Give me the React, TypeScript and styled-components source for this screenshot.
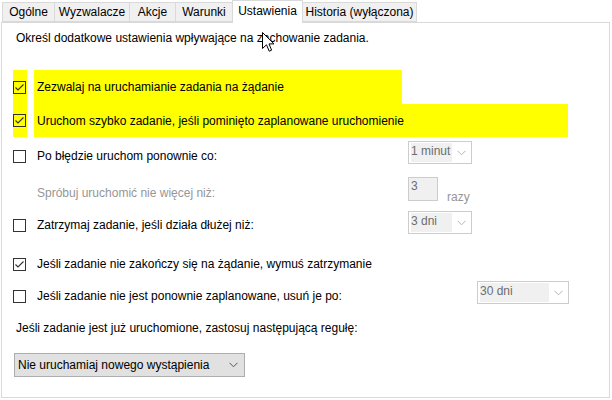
import React from "react";
import styled, { createGlobalStyle } from "styled-components";

const GlobalStyle = createGlobalStyle`
  html, body { margin: 0; padding: 0; background: #ffffff; }
  body {
    font-family: "Liberation Sans", Arial, sans-serif;
    font-size: 12px;
    color: #000000;
  }
`;

const YELLOW = "#ffff00";

const Root = styled.div`
  position: relative;
  width: 612px;
  height: 400px;
  overflow: hidden;
  background: #ffffff;
`;

const TabBar = styled.div`
  display: flex;
  align-items: flex-end;
  height: 22px;
  padding-left: 2px;
  position: relative;
  z-index: 1;
`;

const Tab = styled.div<{ $w: number; $active?: boolean; $first?: boolean }>`
  box-sizing: border-box;
  width: ${(p) => p.$w}px;
  height: ${(p) => (p.$active ? 23 : 20)}px;
  margin-bottom: ${(p) => (p.$active ? -1 : 0)}px;
  margin-left: ${(p) => (p.$first ? 0 : -1)}px;
  display: flex;
  align-items: ${(p) => (p.$active ? "flex-start" : "center")};
  padding-top: ${(p) => (p.$active ? 3 : 0)}px;
  justify-content: center;
  border: 1px solid #d9d9d9;
  border-bottom: ${(p) => (p.$active ? "none" : "1px solid #d9d9d9")};
  background: ${(p) => (p.$active ? "#ffffff" : "#f0f0f0")};
  position: relative;
  z-index: ${(p) => (p.$active ? 2 : 0)};
  white-space: nowrap;
`;

const Panel = styled.div`
  box-sizing: border-box;
  margin-left: 1px;
  width: 609px;
  height: 376px;
  border: 1px solid #d9d9d9;
  background: #ffffff;
  display: flex;
  flex-direction: column;
`;

const Description = styled.div`
  height: 30px;
  line-height: 30px;
  padding-left: 14px;
  white-space: nowrap;
`;

const Row = styled.div<{ $h: number; $mt?: number }>`
  display: flex;
  height: ${(p) => p.$h}px;
  margin-top: ${(p) => p.$mt ?? 0}px;
  padding-left: 11px;
`;

const CheckCell = styled.div<{ $hl?: boolean }>`
  width: 14px;
  display: flex;
  align-items: center;
  background: ${(p) => (p.$hl ? YELLOW : "transparent")};
`;

const Box = styled.div`
  box-sizing: border-box;
  width: 13px;
  height: 13px;
  border: 1px solid #333333;
  display: flex;
  align-items: center;
  justify-content: center;
`;

const Label = styled.div<{ $w: number; $hl?: boolean; $muted?: boolean }>`
  box-sizing: border-box;
  width: ${(p) => p.$w}px;
  margin-left: 7px;
  padding-left: 3px;
  display: flex;
  align-items: center;
  white-space: nowrap;
  background: ${(p) => (p.$hl ? YELLOW : "transparent")};
  color: ${(p) => (p.$muted ? "#969696" : "#000000")};
`;

const Controls = styled.div`
  display: flex;
  align-items: flex-start;
`;

const Combo = styled.div<{ $w: number }>`
  box-sizing: border-box;
  width: ${(p) => p.$w}px;
  height: 23px;
  border: 1px solid #cccccc;
  display: flex;
  align-items: flex-start;
  padding: 1px 0 0 2px;
`;

const ComboValue = styled.div<{ $w: number }>`
  width: ${(p) => p.$w}px;
  height: 19px;
  background: #f0f0f0;
  color: #6d6d6d;
  line-height: 17px;
  overflow: hidden;
  white-space: nowrap;
`;

const ChevronSlot = styled.div`
  flex: 1;
  height: 19px;
  display: flex;
  align-items: center;
  justify-content: center;
`;

const SpinBox = styled.div`
  box-sizing: border-box;
  width: 30px;
  height: 24px;
  border: 1px solid #cccccc;
  background: #f0f0f0;
  color: #6d6d6d;
  padding: 1px 0 0 2px;
  line-height: 15px;
`;

const Unit = styled.div`
  align-self: center;
  margin-left: 9px;
  margin-top: 8px;
  color: #969696;
`;

const Note = styled.div`
  height: 18px;
  line-height: 18px;
  margin-top: 8px;
  padding-left: 14px;
  white-space: nowrap;
`;

const Select = styled.div`
  box-sizing: border-box;
  width: 231px;
  height: 24px;
  margin: 16px 0 0 12px;
  border: 1px solid #adadad;
  background: #e1e1e1;
  display: flex;
  align-items: center;
  padding-left: 3px;
  padding-right: 6px;
  justify-content: space-between;
  white-space: nowrap;
`;

const Cursor = styled.svg`
  position: absolute;
  left: 262px;
  top: 32px;
  z-index: 5;
`;

const Check = ({ on }: { on?: boolean }) => (
  <Box>
    {on && (
      <svg width="11" height="11" viewBox="0 0 11 11">
        <polyline points="1.5,5.5 4,8 9.5,2.5" fill="none" stroke="#333333" strokeWidth="1.1" />
      </svg>
    )}
  </Box>
);

const Chevron = ({ color }: { color: string }) => (
  <svg width="9" height="6" viewBox="0 0 9 6">
    <polyline points="0.5,0.8 4.5,4.8 8.5,0.8" fill="none" stroke={color} strokeWidth="1" />
  </svg>
);

const DisabledCombo = ({ w, vw, value }: { w: number; vw: number; value: string }) => (
  <Combo $w={w}>
    <ComboValue $w={vw}>{value}</ComboValue>
    <ChevronSlot>
      <Chevron color="#b4b4b4" />
    </ChevronSlot>
  </Combo>
);

const tabs = [
  { label: "Ogólne", w: 53 },
  { label: "Wyzwalacze", w: 76 },
  { label: "Akcje", w: 47 },
  { label: "Warunki", w: 58 },
  { label: "Ustawienia", w: 71, active: true },
  { label: "Historia (wyłączona)", w: 115 },
];

export default function App() {
  return (
    <Root>
      <GlobalStyle />
      <TabBar>
        {tabs.map((t, i) => (
          <Tab key={t.label} $w={t.w} $active={t.active} $first={i === 0}>
            {t.label}
          </Tab>
        ))}
      </TabBar>
      <Panel>
        <Description>Określ dodatkowe ustawienia wpływające na zachowanie zadania.</Description>

        <Row $h={34} $mt={17}>
          <CheckCell $hl>
            <Check on />
          </CheckCell>
          <Label $w={368} $hl>
            Zezwalaj na uruchamianie zadania na żądanie
          </Label>
        </Row>
        <Row $h={33}>
          <CheckCell $hl>
            <Check on />
          </CheckCell>
          <Label $w={534} $hl>
            Uruchom szybko zadanie, jeśli pominięto zaplanowane uruchomienie
          </Label>
        </Row>

        <Row $h={30} $mt={4}>
          <CheckCell>
            <Check />
          </CheckCell>
          <Label $w={374}>Po błędzie uruchom ponownie co:</Label>
          <Controls>
            <DisabledCombo w={64} vw={41} value="1 minut" />
          </Controls>
        </Row>

        <Row $h={32} $mt={6}>
          <CheckCell />
          <Label $w={374} $muted>
            Spróbuj uruchomić nie więcej niż:
          </Label>
          <Controls>
            <SpinBox>3</SpinBox>
            <Unit>razy</Unit>
          </Controls>
        </Row>

        <Row $h={28} $mt={2}>
          <CheckCell>
            <Check />
          </CheckCell>
          <Label $w={374}>Zatrzymaj zadanie, jeśli działa dłużej niż:</Label>
          <Controls>
            <DisabledCombo w={64} vw={41} value="3 dni" />
          </Controls>
        </Row>

        <Row $h={28} $mt={11}>
          <CheckCell>
            <Check on />
          </CheckCell>
          <Label $w={500}>Jeśli zadanie nie zakończy się na żądanie, wymuś zatrzymanie</Label>
        </Row>

        <Row $h={30} $mt={3}>
          <CheckCell>
            <Check />
          </CheckCell>
          <Label $w={443}>Jeśli zadanie nie jest ponownie zaplanowane, usuń je po:</Label>
          <Controls>
            <DisabledCombo w={92} vw={69} value="30 dni" />
          </Controls>
        </Row>

        <Note>Jeśli zadanie jest już uruchomione, zastosuj następującą regułę:</Note>

        <Select>
          <span>Nie uruchamiaj nowego wystąpienia</span>
          <Chevron color="#555555" />
        </Select>
      </Panel>

      <Cursor width="13" height="21" viewBox="0 0 13 21">
        <path
          d="M0.5,0.5 L0.5,16.5 L4.5,12.8 L7.2,19.2 L9.6,18.2 L7,11.9 L12,11.9 Z"
          fill="#ffffff"
          stroke="#000000"
          strokeWidth="1"
          strokeLinejoin="miter"
        />
      </Cursor>
    </Root>
  );
}
